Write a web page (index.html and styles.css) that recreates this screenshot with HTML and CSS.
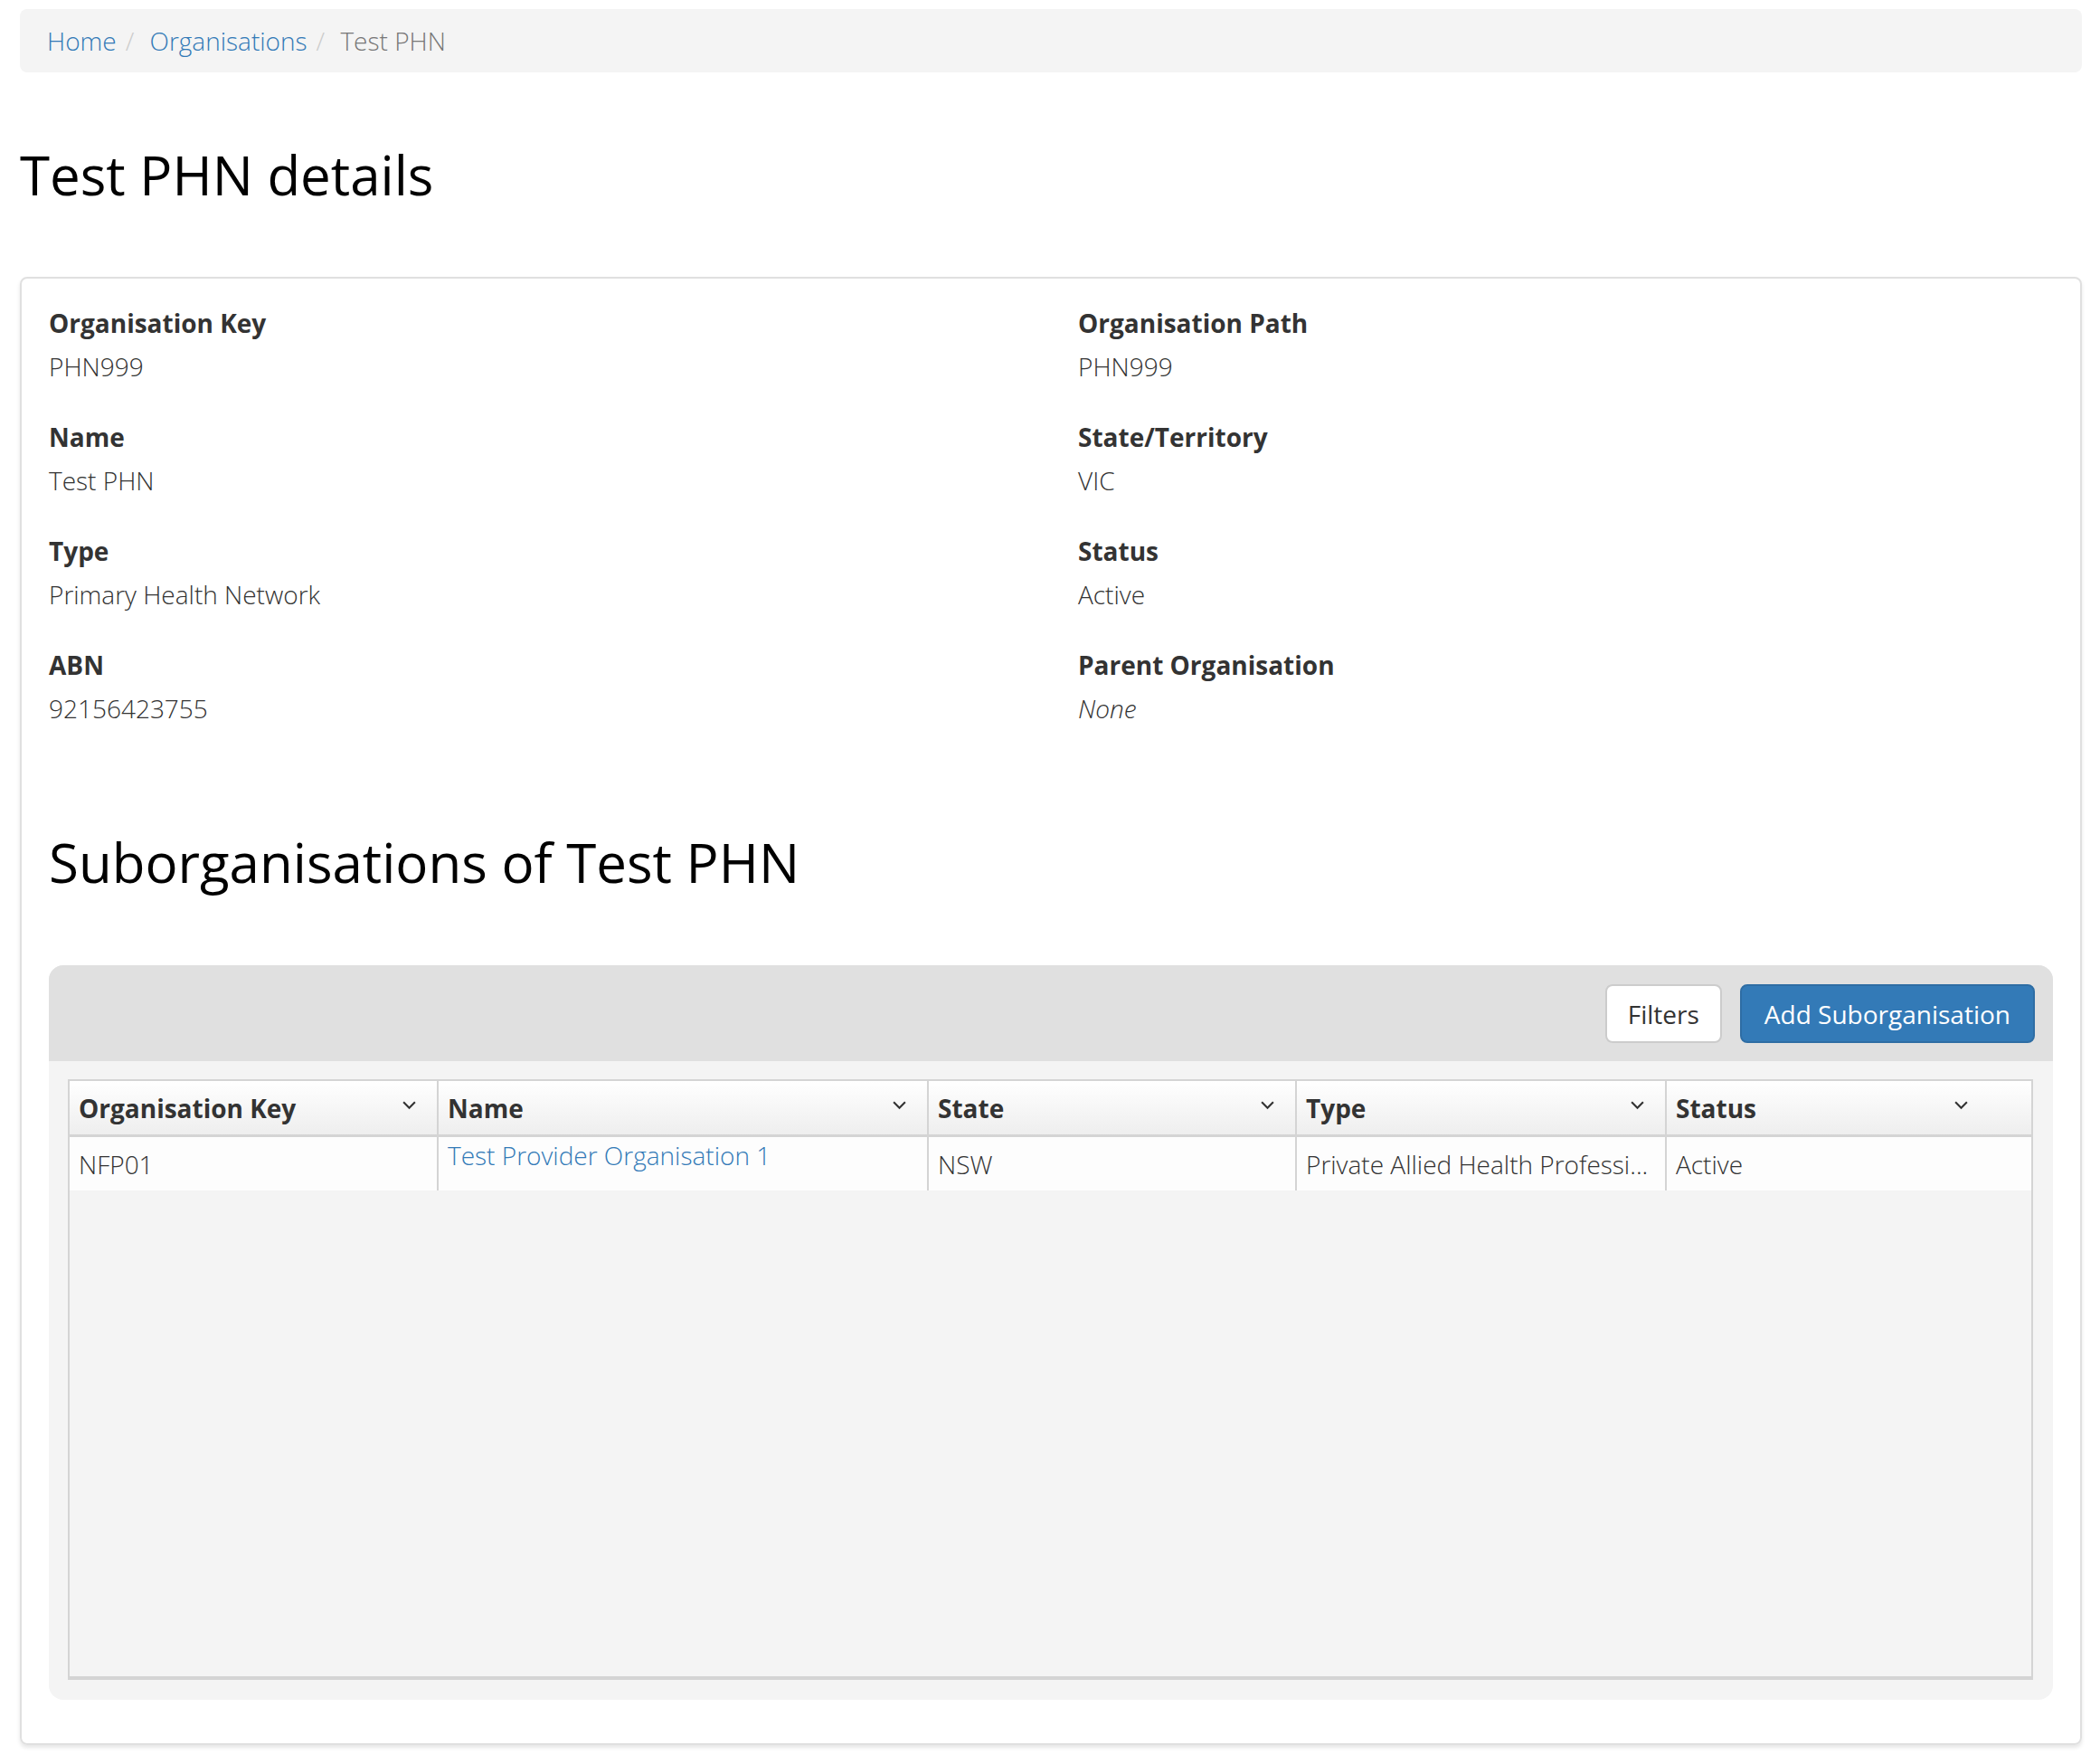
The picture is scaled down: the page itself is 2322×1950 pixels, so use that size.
FILE: index.html
```html
<!DOCTYPE html>
<html lang="en">
<head>
<meta charset="utf-8">
<title>Test PHN details</title>
<link rel="stylesheet" href="styles.css">
</head>
<body>
<div class="page">
  <ol class="breadcrumb">
    <li><a href="#">Home</a></li>
    <li><a href="#">Organisations</a></li>
    <li class="active">Test PHN</li>
  </ol>

  <h1 class="title">Test PHN details</h1>

  <div class="card">
    <div class="details">
      <div class="field"><div class="label">Organisation Key</div><div class="value">PHN999</div></div>
      <div class="field"><div class="label">Organisation Path</div><div class="value">PHN999</div></div>
      <div class="field"><div class="label">Name</div><div class="value">Test PHN</div></div>
      <div class="field"><div class="label">State/Territory</div><div class="value">VIC</div></div>
      <div class="field"><div class="label">Type</div><div class="value">Primary Health Network</div></div>
      <div class="field"><div class="label">Status</div><div class="value">Active</div></div>
      <div class="field"><div class="label">ABN</div><div class="value">92156423755</div></div>
      <div class="field"><div class="label">Parent Organisation</div><div class="value none">None</div></div>
    </div>

    <h2 class="subtitle">Suborganisations of Test PHN</h2>

    <div class="panel">
      <div class="toolbar">
        <button class="btn btn-default">Filters</button>
        <button class="btn btn-primary">Add Suborganisation</button>
      </div>
      <div class="panel-body">
        <div class="grid">
          <div class="grid-row grid-head">
            <div class="hcell"><span>Organisation Key</span><svg class="chev" viewBox="0 0 16 10"><polyline points="2,2 8,8 14,2"/></svg></div>
            <div class="hcell"><span>Name</span><svg class="chev" viewBox="0 0 16 10"><polyline points="2,2 8,8 14,2"/></svg></div>
            <div class="hcell"><span>State</span><svg class="chev" viewBox="0 0 16 10"><polyline points="2,2 8,8 14,2"/></svg></div>
            <div class="hcell"><span>Type</span><svg class="chev" viewBox="0 0 16 10"><polyline points="2,2 8,8 14,2"/></svg></div>
            <div class="hcell last"><span>Status</span><svg class="chev" viewBox="0 0 16 10"><polyline points="2,2 8,8 14,2"/></svg></div>
          </div>
          <div class="grid-row grid-data">
            <div class="cell">NFP01</div>
            <div class="cell top"><a href="#">Test Provider Organisation 1</a></div>
            <div class="cell">NSW</div>
            <div class="cell">Private Allied Health Professi...</div>
            <div class="cell last">Active</div>
          </div>
        </div>
      </div>
    </div>
  </div>
</div>
</body>
</html>
```

FILE: styles.css
```css
* { box-sizing: border-box; }

body {
  margin: 0;
  font-family: "Open Sans", "Noto Sans", sans-serif;
  font-size: 28px;
  font-weight: 300;
  line-height: 40px;
  color: #333;
  background: #fff;
}

a { color: #337ab7; text-decoration: none; }

.page {
  padding: 10px 20px 20px 22px;
}

/* Breadcrumb */
.breadcrumb {
  list-style: none;
  margin: 0;
  padding: 15px 30px;
  background: #f4f4f4;
  border-radius: 8px;
  display: flex;
}
.breadcrumb li + li::before {
  content: "/\00a0";
  padding: 0 10px;
  color: #ccc;
}
.breadcrumb .active { color: #777; }

/* Title */
.title {
  margin: 80px 0 80px;
  font-size: 60px;
  font-weight: 400;
  line-height: 66px;
  color: #000;
}

/* Card */
.card {
  border: 2px solid #e0e0e0;
  border-radius: 8px;
  box-shadow: 0 3px 4px rgba(0, 0, 0, 0.10);
  padding: 29px 30px 48px;
}

.details {
  display: grid;
  grid-template-columns: 1fr 1fr;
  column-gap: 60px;
}
.field { margin-bottom: 38px; }
.label {
  font-weight: 700;
  color: #333;
  margin-bottom: 8px;
}
.value { color: #333; }
.value.none { font-style: italic; }

.subtitle {
  margin: 79px 0 81px;
  font-size: 60px;
  font-weight: 400;
  line-height: 66px;
  color: #000;
}

/* Panel with grid */
.panel {
  border-radius: 16px;
  overflow: hidden;
  background: #f4f4f4;
}
.toolbar {
  background: #e0e0e0;
  display: flex;
  justify-content: flex-end;
  gap: 20px;
  padding: 21px 20px 20px;
}
.btn {
  font-family: inherit;
  font-size: 28px;
  font-weight: 400;
  line-height: 40px;
  padding: 10.5px 25px;
  border-radius: 8px;
  border: 2px solid transparent;
  cursor: pointer;
}
.btn-default {
  background: #fff;
  border-color: #ccc;
  color: #333;
  padding-left: 23px;
  padding-right: 23px;
}
.btn-primary {
  background: #337ab7;
  border-color: #2e6da4;
  color: #fff;
}

.panel-body {
  padding: 20px 22px 22px 21px;
}

.grid {
  height: 664px;
  border: 2px solid #d4d4d4;
  border-bottom-width: 4px;
  background: #f4f4f4;
}
.grid-row {
  display: grid;
  grid-template-columns: 408px 542px 407px 409px 1fr;
}
.grid-head {
  border-bottom: 3px solid #d4d4d4;
}
.hcell {
  height: 59px;
  display: flex;
  align-items: center;
  justify-content: space-between;
  padding: 0 22px 0 10px;
  font-weight: 700;
  color: #333;
  border-right: 2px solid #d4d4d4;
  background: linear-gradient(#ffffff, #eeeeee);
}
.hcell.last {
  border-right: none;
  padding-right: 69px;
}
.chev {
  width: 17px;
  height: 11px;
  fill: none;
  stroke: #333;
  stroke-width: 2;
  margin-top: -6px;
}

.grid-data { background: #fdfdfd; }
.cell {
  height: 59px;
  display: flex;
  align-items: center;
  padding: 0 10px;
  border-right: 2px solid #d4d4d4;
  white-space: nowrap;
  overflow: hidden;
}
.cell.top { align-items: flex-start; }
.cell.last { border-right: none; }
```
